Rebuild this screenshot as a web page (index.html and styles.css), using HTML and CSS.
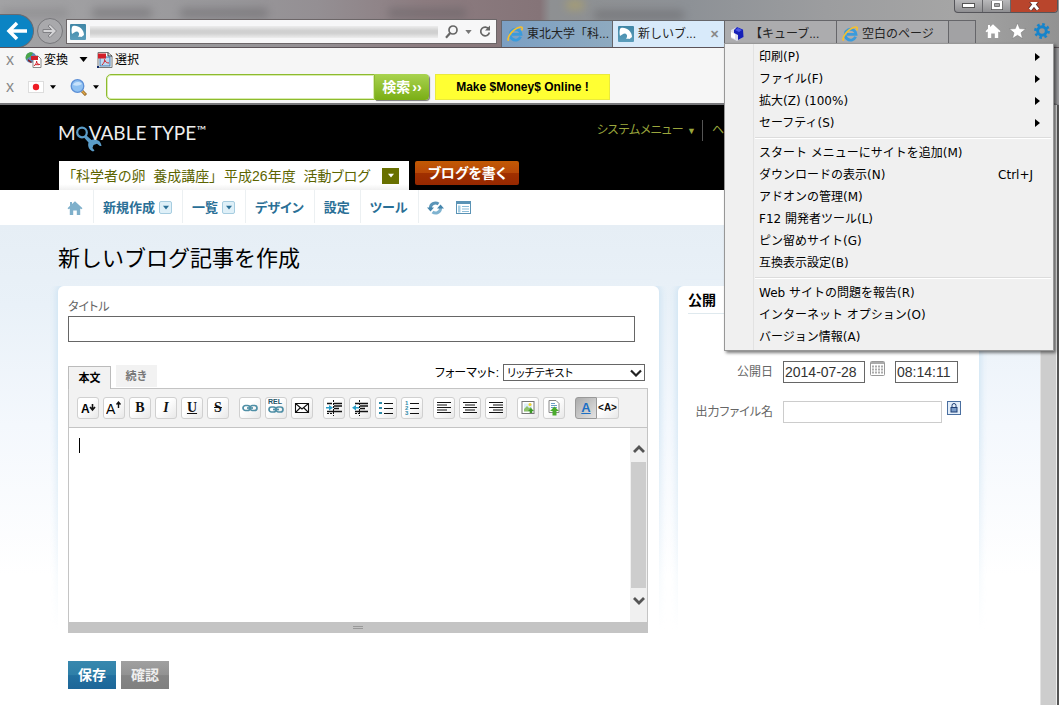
FILE: index.html
```html
<!DOCTYPE html>
<html lang="ja">
<head>
<meta charset="utf-8">
<title>新しいブログ記事を作成</title>
<link rel="stylesheet" href="styles.css">
</head>
<body>
<svg class="defs" width="0" height="0" aria-hidden="true">
  <defs>
    <linearGradient id="gMt" x1="0" y1="0" x2="0" y2="1"><stop offset="0" stop-color="#3f86a6"/><stop offset="1" stop-color="#5b9dbb"/></linearGradient>
    <symbol id="mt" viewBox="0 0 16 16"><rect width="16" height="16" rx="1" fill="url(#gMt)"/><path d="M2 10C1 5 2 2 3 2C8 1 14 5 14 11L11.500 13C10.500 12.500 9 12.500 8 13C10 10 9 8 7 7.500C5 7.500 3.500 9 2 10Z" fill="#fff"/></symbol>
    <symbol id="ie" viewBox="0 0 16 16"><path d="M13.600 10.800A5.400 5.400 0 1 1 14 8.300H5" fill="none" stroke="#3a9bdc" stroke-width="2.800"/><path d="M1.600 14.800C-.5 12 5 3.500 12.500 1.200C15.500 .4 15.800 2 14.600 4.300" fill="none" stroke="#f5c02e" stroke-width="1.700"/></symbol>
    <symbol id="home" viewBox="0 0 16 16"><path d="M8 1.200L15.500 8.200L14.300 9.300L13.200 8.400V15H9.800V10.500H6.200V15H2.800V8.400L1.700 9.300L.5 8.200L3 5.800V2H5V4Z" fill="currentColor"/></symbol>
    <symbol id="tri" viewBox="0 0 8 5"><path d="M0 0H8L4 5Z" fill="currentColor"/></symbol>
  </defs>
</svg>

<header class="chrome">
  <div class="ghosts" aria-hidden="true"><i class="g1"></i><i class="g2"></i><i class="g3"></i><i class="g4"></i><i class="g5"></i><i class="g6"></i></div>
  <button class="back" aria-label="戻る"><svg width="22" height="20" viewBox="0 0 22 20"><path d="M21 10H3M11 2L3 10L11 18" fill="none" stroke="#fff" stroke-width="3.500"/></svg></button>
  <button class="forward" aria-label="進む"><svg width="16" height="14" viewBox="0 0 16 14"><path d="M1 5.500H9.500L6 2L8 .5L14.500 7L8 13.500L6 12L9.500 8.500H1Z" fill="#d4d4d6" stroke="#808084"/></svg></button>
  <div class="address">
    <svg width="16" height="16"><use href="#mt"/></svg>
    <div class="urlwrap"><input class="url" type="text" aria-label="アドレス"></div>
    <button aria-label="検索"><svg width="13" height="14" viewBox="0 0 13 14"><circle cx="8" cy="5" r="4" fill="none" stroke="#666" stroke-width="1.700"/><path d="M5.200 8L1 12.800" stroke="#666" stroke-width="2.200"/></svg></button>
    <button aria-label="履歴" class="soft"><svg width="7" height="4"><use href="#tri"/></svg></button>
    <button aria-label="更新"><svg width="12" height="13" viewBox="0 0 12 13"><path d="M9.800 4A4.400 4.400 0 1 0 10.400 7.500" fill="none" stroke="#666" stroke-width="1.700"/><path d="M11 .5V5.500H6Z" fill="#666"/></svg></button>
  </div>
  <nav class="tabs" aria-label="タブ">
    <button class="tab blue"><svg width="16" height="16"><use href="#ie"/></svg><span>東北大学「科...</span></button>
    <button class="tab active"><svg width="16" height="16"><use href="#mt"/></svg><span>新しいブ...</span><b class="x">✕</b></button>
    <button class="tab"><svg width="16" height="16" viewBox="0 0 16 16"><path d="M7 1L13 3.500V11L7 15L1 12V4Z" fill="#dedee8"/><path d="M7 1L13 3.500L13.500 11L8 14V9L4 7V4Z" fill="#1620b8"/><path d="M8 2L12 4L9 6L5 4Z" fill="#4a55e6"/><path d="M1 6L5 8V13L1 11Z" fill="#fff"/></svg><span>【キューブ...</span></button>
    <button class="tab"><svg width="16" height="16"><use href="#ie"/></svg><span>空白のページ</span></button>
    <button class="newtab" aria-label="新しいタブ"></button>
  </nav>
  <div class="tools">
    <button aria-label="ホーム"><svg width="16" height="16"><use href="#home"/></svg></button>
    <button aria-label="お気に入り"><svg width="17" height="16" viewBox="0 0 17 16"><path d="M8.500 0L10.700 5.600L16.600 6L12 9.800L13.600 15.600L8.500 12.300L3.400 15.600L5 9.800L.4 6L6.300 5.600Z" fill="#fff" stroke="#777" stroke-width=".5"/></svg></button>
    <button aria-label="ツール"><svg width="16" height="16" viewBox="0 0 16 16"><circle cx="8" cy="8" r="4.300" fill="none" stroke="#1584cc" stroke-width="3"/><circle cx="8" cy="8" r="6.600" fill="none" stroke="#1584cc" stroke-width="2.600" stroke-dasharray="2.600 2.584"/></svg></button>
  </div>
  <div class="winctl">
    <button aria-label="最小化"><svg width="13" height="6" viewBox="0 0 13 6"><rect x=".5" y=".5" width="12" height="4" fill="#fff" stroke="#555"/></svg></button>
    <button aria-label="元に戻す"><svg width="12" height="10" viewBox="0 0 12 10"><rect x="2" y="1" width="8" height="6" fill="none" stroke="#555" stroke-width="4"/><rect x="2" y="1" width="8" height="6" fill="none" stroke="#fff" stroke-width="2.400"/></svg></button>
    <button class="close" aria-label="閉じる"><svg width="14" height="9" viewBox="0 0 14 9"><path d="M2.500 -3L11 7.500M11.500 -3L3 7.500" stroke="#5a3030" stroke-width="4.400"/><path d="M2.500 -3L11 7.500M11.500 -3L3 7.500" stroke="#fff" stroke-width="2.800"/></svg></button>
  </div>
</header>

<section class="bars">
  <div class="bar">
    <button class="bx" aria-label="閉じる">x</button>
    <button class="pdf"><svg width="17" height="16" viewBox="0 0 17 16"><circle cx="6" cy="5.500" r="5.300" fill="#5b87bd"/><path d="M2 2C4 0 7 0 8 1L6 4L3 6L1 8C0 5 1 3 2 2Z" fill="#4aa548"/><path d="M3 7L7 10L6 11L3 9Z" fill="#8b1f1f"/><path d="M8 4H13L16 7V15.500H8Z" fill="#fff" stroke="#888"/><rect x="6" y="4" width="7" height="4" fill="#d2202a"/><path d="M9 14C11 12 12 10 11.500 9M11.500 9C12 12 13.500 12.500 15 12.500M10 12.700H14" fill="none" stroke="#d2202a"/></svg>変換</button>
    <button class="drop" aria-label="変換メニュー"><svg width="9" height="5"><use href="#tri"/></svg></button>
    <button class="pdf"><svg width="16" height="16" viewBox="0 0 16 16"><path d="M1 .5H11L15 4V15.500H1Z" fill="#fff" stroke="#777"/><path d="M11 .5V4H15" fill="none" stroke="#333"/><rect x="3" y="5" width="10" height="9" fill="#bcd8ef" stroke="#3f78ae"/><rect x="1" y="1.500" width="8" height="5" fill="#d2202a"/><path d="M5 13C7 11 8 9 7.500 7.500C8 10 10 11 12 11" fill="none" stroke="#d2202a"/><path d="M0 14H2V16H0Z" fill="#102a6a"/></svg>選択</button>
  </div>
  <div class="bar search">
    <button class="bx" aria-label="閉じる">x</button>
    <button class="flag" aria-label="日本"><svg width="16" height="12" viewBox="0 0 16 12"><rect x=".5" y=".5" width="15" height="11" fill="#fff" stroke="#ddd"/><circle cx="8" cy="6" r="3.200" fill="#ee1c25"/></svg><svg width="6" height="4"><use href="#tri"/></svg></button>
    <button class="lens" aria-label="検索の種類"><svg width="17" height="17" viewBox="0 0 17 17"><path d="M12 12L16 16" stroke="#8a5a18" stroke-width="3"/><path d="M12 12L15.500 15.500" stroke="#e0aa4c" stroke-width="1.500"/><circle cx="7.500" cy="7" r="6.300" fill="#8fc1f2" stroke="#5c8fd6" stroke-width="1.300"/><path d="M3 6C4 2.500 10 2 12 5C9 7 6 7 3 6Z" fill="#c8e2fb"/></svg><svg width="6" height="4"><use href="#tri"/></svg></button>
    <form class="sform" onsubmit="return false"><input type="text" aria-label="検索語"><button>検索<span>››</span></button></form>
    <a class="ad" href="#">Make $Money$ Online !</a>
  </div>
</section>

<div class="window">
<div class="page">
  <header class="mt">
    <div class="top">
      <a class="logo" href="#" aria-label="Movable Type"><span>M</span><svg width="27" height="26" viewBox="0 0 27 26"><circle cx="7" cy="6.500" r="4.800" fill="none" stroke="#5a9cc8" stroke-width="2.200"/><path d="M9 11.500L11.500 9.500L16.500 14C21 12.500 26 14.500 26.500 20L25 20L22 17.800L18.500 19L17.500 22L19.500 24.500L18 25.500C13.500 23.500 12.500 20 13.500 16.500Z" fill="#5a9cc8"/></svg><span>VABLE TYPE</span><small>™</small></a>
      <div class="sys"><a href="#">システムメニュー <small>▼</small></a><a href="#">ヘルプ</a></div>
    </div>
    <div class="blogrow">
      <button class="blog">「科学者の卵&nbsp; 養成講座」&nbsp; 平成26年度&nbsp; 活動ブログ<i><svg width="6" height="5"><use href="#tri"/></svg></i></button>
      <button class="write">ブログを書く</button>
    </div>
  </header>
  <nav class="menu">
    <a href="#" aria-label="ホーム" class="pale"><svg width="16" height="16"><use href="#home"/></svg></a>
    <a href="#">新規作成<i><svg width="6" height="5"><use href="#tri"/></svg></i></a>
    <a href="#">一覧<i><svg width="6" height="5"><use href="#tri"/></svg></i></a>
    <a href="#">デザイン</a>
    <a href="#">設定</a>
    <a href="#">ツール</a>
    <a href="#" aria-label="再構築"><svg width="17" height="14" viewBox="0 0 17 14"><path d="M3.500 7.500A5 5 0 0 1 11.500 3" fill="none" stroke="#5b95b8" stroke-width="3"/><path d="M13.500 6.500A5 5 0 0 1 5.500 11" fill="none" stroke="#7fb3d0" stroke-width="3"/><path d="M0 6.500H7L3.500 10.500ZM10 7.500H17L13.500 3.500Z" fill="#4585ac"/></svg></a>
    <a href="#" aria-label="サイトの表示" class="last"><svg width="15" height="13" viewBox="0 0 15 13"><rect x=".5" y=".5" width="14" height="12" fill="#fff" stroke="#5b93b5"/><path d="M1 2H14" stroke="#5b93b5" stroke-width="2"/><path d="M2 4.500H4.500V11.500H2Z" fill="#a7cfe4"/><path d="M6 5.500H13M6 8H13M6 10.500H13" stroke="#8dbdd8"/></svg></a>
  </nav>
  <main class="body">
    <h1>新しいブログ記事を作成</h1>
    <div class="cols">
      <section class="panel edit">
        <label for="title">タイトル</label>
        <input id="title" type="text">
        <div class="tabrow">
          <button class="et on">本文</button><button class="et">続き</button>
          <label class="fmt" for="fmt">フォーマット:</label>
          <div class="selwrap"><select id="fmt"><option>リッチテキスト</option></select><svg width="12" height="8" viewBox="0 0 12 8"><path d="M1 1.500L6 6.500L11 1.500" fill="none" stroke="#222" stroke-width="2.200"/></svg></div>
        </div>
        <div class="editor">
          <div class="tb">
            <div class="grp">
              <button aria-label="小さく"><svg width="16" height="16" viewBox="0 0 16 16"><text x="1" y="13" class="ga">A</text><path d="M12.500 4V10M10 7L12.500 10L15 7" fill="none" stroke="#111" stroke-width="1.600"/></svg></button>
              <button aria-label="大きく"><svg width="16" height="16" viewBox="0 0 16 16"><text x="0" y="14" class="gb">A</text><path d="M12.500 8V2M10.500 4.500L12.500 2L14.500 4.500" fill="none" stroke="#111" stroke-width="1.400"/></svg></button>
              <button aria-label="太字"><b>B</b></button>
              <button aria-label="斜体"><b><em>I</em></b></button>
              <button aria-label="下線"><b><u>U</u></b></button>
              <button aria-label="取り消し線"><b><s>S</s></b></button>
            </div>
            <div class="grp">
              <button aria-label="リンク"><svg width="16" height="16" viewBox="0 0 16 16"><g fill="none" stroke="#4f8fa6" stroke-width="1.700"><rect x="1" y="5.500" width="7" height="5" rx="2.500"/><rect x="8" y="5.500" width="7" height="5" rx="2.500"/><path d="M5 8H11"/></g></svg></button>
              <button aria-label="RELリンク"><svg width="16" height="20" viewBox="0 0 16 20"><text x="0" y="6" class="rel">REL</text><g fill="none" stroke="#4f8fa6" stroke-width="1.700"><rect x="1" y="9" width="7" height="5" rx="2.500"/><rect x="8" y="9" width="7" height="5" rx="2.500"/><path d="M5 11.500H11"/></g></svg></button>
              <button aria-label="メール"><svg width="16" height="16" viewBox="0 0 16 16"><path d="M1.500 3.500H14.500V12.500H1.500ZM1.500 3.500L8 9L14.500 3.500M1.500 12.500L6 8M14.500 12.500L10 8" fill="#fff" stroke="#111" stroke-width="1.100"/></svg></button>
            </div>
            <div class="grp">
              <button aria-label="インデント"><svg width="18" height="16" viewBox="0 0 18 16"><path d="M2 3.500H7M9 3.500H17M9 6H17M9 8.500H14M2 11.500H17" stroke="#111" stroke-width="1.500"/><path d="M8.500 0V16M2 13.500H9" stroke="#111" stroke-dasharray="2 1"/><path d="M1 7H4V5L8 7.700L4 10.500V8.500H1Z" fill="#2b9dc7"/></svg></button>
              <button aria-label="インデント解除"><svg width="18" height="16" viewBox="0 0 18 16"><path d="M4 3.500H17M9 6H17M9 8.500H14M4 11.500H17" stroke="#111" stroke-width="1.500"/><path d="M8.500 0V16M4 13.500H9" stroke="#111" stroke-dasharray="2 1"/><path d="M8 7H5V5L1 7.700L5 10.500V8.500H8Z" fill="#2b9dc7"/></svg></button>
              <button aria-label="箇条書き"><svg width="16" height="16" viewBox="0 0 16 16"><path d="M6 3.500H15M6 8.500H15M6 13.500H15" stroke="#111"/><path d="M1 2H4V4H1ZM1 7H4V9H1ZM1 12H4V14H1Z" fill="#2f8aa8"/></svg></button>
              <button aria-label="番号付き"><svg width="16" height="16" viewBox="0 0 16 16"><path d="M6 3.500H15M6 8.500H15M6 13.500H15" stroke="#111"/><g class="num"><text x="1" y="5">1</text><text x="1" y="10">2</text><text x="1" y="15">3</text></g></svg></button>
            </div>
            <div class="grp">
              <button aria-label="左揃え"><svg width="16" height="16" viewBox="0 0 16 16"><path d="M1 2.500H15M1 5H11M1 7.500H15M1 10H11M1 12.500H15" stroke="#111" stroke-width="1.200"/></svg></button>
              <button aria-label="中央揃え"><svg width="16" height="16" viewBox="0 0 16 16"><path d="M1 2.500H15M3 5H13M1 7.500H15M3 10H13M1 12.500H15" stroke="#111" stroke-width="1.200"/></svg></button>
              <button aria-label="右揃え"><svg width="16" height="16" viewBox="0 0 16 16"><path d="M1 2.500H15M5 5H15M1 7.500H15M5 10H15M1 12.500H15" stroke="#111" stroke-width="1.200"/></svg></button>
            </div>
            <div class="grp">
              <button aria-label="画像"><svg width="16" height="16" viewBox="0 0 16 16"><rect x="2" y="1.500" width="12" height="12" fill="#fff" stroke="#777"/><rect x="4" y="3.500" width="8" height="8" fill="#dceef8"/><path d="M4 11.500V9L7 6L9 8L11 7L12 11.500Z" fill="#8dc06a"/><circle cx="10" cy="4.500" r="1.500" fill="#f2d22e"/><path d="M11 8L14 11H12.300V13H9.700V11H8Z" fill="#3c9a28"/></svg></button>
              <button aria-label="ファイル"><svg width="16" height="16" viewBox="0 0 16 16"><path d="M3 .5H10L13 3.500V12.500H3Z" fill="#fff" stroke="#888"/><path d="M5 3.500H9M5 5.500H11M5 7.500H11" stroke="#6c9fc4"/><path d="M8.500 6.500L13 11H10.500V15.500H6.500V11H4Z" fill="#4aab2c"/></svg></button>
            </div>
            <div class="pair">
              <button class="on" aria-label="リッチ"><u>A</u></button><button aria-label="HTML">&lt;A&gt;</button>
            </div>
          </div>
          <div class="area">
            <textarea aria-label="本文"></textarea><i class="caret"></i>
            <div class="sb"><svg width="12" height="9" viewBox="0 0 12 9"><path d="M1 7L6 2L11 7" fill="none" stroke="#555" stroke-width="2.800"/></svg><i></i><svg width="12" height="9" viewBox="0 0 12 9"><path d="M1 2L6 7L11 2" fill="none" stroke="#555" stroke-width="2.800"/></svg></div>
          </div>
          <div class="grip"><i></i></div>
        </div>
      </section>
      <aside class="panel pub">
        <h2>公開</h2>
        <div class="fields">
          <label for="d">公開日</label>
          <div class="f"><input id="d" class="date" type="text" value="2014-07-28"><button class="cal" aria-label="カレンダー"><svg width="15" height="15" viewBox="0 0 15 15"><rect x=".5" y=".5" width="14" height="14" rx="1" fill="#fff" stroke="#999"/><path d="M1 2H14" stroke="#aaa" stroke-width="2"/><path d="M2 5.500H13M2 8.500H13M2 11.500H13" stroke="#aaa" stroke-width="2" stroke-dasharray="2 1"/></svg></button><input class="time" type="text" value="08:14:11" aria-label="公開時刻"></div>
          <label for="o">出力ファイル名</label>
          <div class="f"><input id="o" class="out" type="text"><button class="lock" aria-label="ロック"><svg width="14" height="14" viewBox="0 0 14 14"><rect x=".5" y=".5" width="13" height="13" fill="#e3eefa" stroke="#4a6fa0"/><rect x="4" y="6.500" width="6" height="4.500" fill="#7b9cc8" stroke="#1f3f74"/><path d="M5 6V4.500A2 2 0 0 1 9 4.500V6" fill="none" stroke="#1f3f74"/></svg></button></div>
        </div>
      </aside>
    </div>
    <div class="actions"><button class="save">保存</button><button>確認</button></div>
  </main>
</div>
<div class="pagebar"></div>
</div>

<div class="popup" role="menu">
  <button role="menuitem">印刷(P)<svg class="arr" width="5" height="8" viewBox="0 0 5 8"><path d="M0 0L5 4L0 8Z"/></svg></button>
  <button role="menuitem">ファイル(F)<svg class="arr" width="5" height="8" viewBox="0 0 5 8"><path d="M0 0L5 4L0 8Z"/></svg></button>
  <button role="menuitem">拡大(Z) (100%)<svg class="arr" width="5" height="8" viewBox="0 0 5 8"><path d="M0 0L5 4L0 8Z"/></svg></button>
  <button role="menuitem">セーフティ(S)<svg class="arr" width="5" height="8" viewBox="0 0 5 8"><path d="M0 0L5 4L0 8Z"/></svg></button>
  <hr>
  <button role="menuitem">スタート メニューにサイトを追加(M)</button>
  <button role="menuitem">ダウンロードの表示(N)<span>Ctrl+J</span></button>
  <button role="menuitem">アドオンの管理(M)</button>
  <button role="menuitem">F12 開発者ツール(L)</button>
  <button role="menuitem">ピン留めサイト(G)</button>
  <button role="menuitem">互換表示設定(B)</button>
  <hr>
  <button role="menuitem">Web サイトの問題を報告(R)</button>
  <button role="menuitem">インターネット オプション(O)</button>
  <button role="menuitem">バージョン情報(A)</button>
</div>
</body>
</html>
```
FILE: styles.css
```css
* { box-sizing: border-box; }
body {
  margin: 0; min-height: 100vh; display: flex; flex-direction: column; position: relative;
  font: 12px/16px "Liberation Sans", "Noto Sans CJK JP", sans-serif; color: #000; background: #fff;
}
button, input, select, textarea { font: inherit; color: inherit; margin: 0; padding: 0; border: 0; border-radius: 0; background: none; outline: none; }
button { display: inline-flex; align-items: center; justify-content: center; white-space: nowrap; }
a { color: inherit; text-decoration: none; }
svg { display: block; flex: none; }
i { font-style: normal; }
.defs { position: absolute; }

/* browser frame */
.chrome {
  position: relative; display: flex; align-items: flex-end; height: 48px; overflow: hidden;
  border-bottom: 1px solid #5c5358;
  background: linear-gradient(90deg, #a3a3a5 0, #98979a 22%, #948f93 30%, #8c7c80 40%, #857478 51%, #8e9092 52%, #8d9196 65%, #9c9d9f 78%, #a5a5a5 90%, #929292 100%);
}
.ghosts i { position: absolute; top: 8px; height: 10px; background: #5c5a5e; opacity: .4; filter: blur(4px); border-radius: 4px; }
.ghosts .g1 { left: 0; width: 68px; opacity: .2; }
.ghosts .g2 { left: 92px; width: 60px; }
.ghosts .g3 { left: 180px; width: 88px; }
.ghosts .g4 { left: 388px; width: 78px; }
.ghosts .g5 { left: 594px; width: 90px; top: 10px; }
.ghosts .g6 { left: 566px; width: 18px; top: 0; background: #c8b04a; }
.back { position: relative; width: 34px; height: 34px; padding-left: 1px; margin-bottom: -1px; border-radius: 0 17px 17px 0; background: #0b84c4; border: 1px solid #6a6a70; border-left: 0; }
.forward { position: relative; width: 26px; height: 26px; margin: 0 3px; border-radius: 13px; border: 1px solid #77777b; background: #a9a9ac; margin-bottom: 3px; }
.address { position: relative; flex: 1; height: 25px; display: flex; align-items: center; gap: 7px; padding: 0 5px 0 3px; margin-bottom: 3px; border: 1px solid #6c6668; background: #f7f7f8; }
.urlwrap { flex: 1; height: 12px; margin-left: -3px; background: linear-gradient(#ededed, #d0d0d0 40%, #d0d0d0 60%, #ededed); }
.url { width: 100%; height: 12px; display: block; }
.soft { color: #777; }
.tabs { position: relative; display: flex; margin-left: 4px; height: 27px; }
.tab { width: 112px; justify-content: flex-start; gap: 4px; padding: 0 5px; border: 1px solid #66666a; border-width: 1px 1px 0 0; background: #acacae; color: #222; }
.tab.blue { background: linear-gradient(90deg, #7b9fc3, #8eaac0); border-left-width: 1px; }
.tab.active { background: #d8eafa; }
.tab .x { margin-left: auto; font-size: 11px; color: #888; }
.newtab { width: 27px; border: 1px solid #66666a; border-width: 1px 1px 0 0; background: #a2a2a4; }
.tools { position: relative; display: flex; gap: 8px; padding: 0 9px 8px 9px; }
.tools button { color: #fff; }
.winctl { position: absolute; right: 1px; top: 0; height: 13px; display: flex; border: 1px solid #55555a; border-top: 0; border-radius: 0 0 4px 4px; background: linear-gradient(#b9b9bb, #8f8f92); overflow: hidden; }
.winctl button { width: 28px; border-right: 1px solid #66666a; }
.winctl .close { width: 46px; border: 0; background: #b9452c; }

.bars { background: #f6f6f6; border-bottom: 2px solid #77777a; height: 57px; border-right: 5px solid #9a9a9c; }
.bar { display: flex; align-items: center; height: 23px; padding-left: 4px; }
.bar.search { height: 32px; }
.bx { width: 12px; margin-right: 9px; font: 16px/16px "Liberation Sans", sans-serif; color: #888; }
.pdf { gap: 2px; }
.drop { margin: 0 9px 0 11px; }
.flag { gap: 6px; margin-left: 3px; }
.lens { gap: 6px; margin: 0 7px 0 14px; }
.sform { display: flex; margin: 0; width: 323px; height: 26px; }
.sform input { flex: 1; min-width: 0; border: 1px solid #8dbb2e; border-radius: 5px 0 0 5px; background: #fff; box-shadow: inset 0 0 0 1px #d9ecae; }
.sform button { width: 54px; gap: 2px; border-radius: 0 4px 4px 0; color: #fff; font-size: 14px; font-weight: bold; background: linear-gradient(#a9d34f, #7aae15); box-shadow: 1px 1px 1px #777; }
.ad { width: 175px; margin-left: 6px; line-height: 24px; text-align: center; font-weight: bold; background: #ffff33; border: 1px solid #eaea3c; }

/* page */
.window { flex: 1; display: flex; }
.page { flex: 1; min-width: 0; display: flex; flex-direction: column; }
.pagebar { width: 19px; background: #cdcdcd; border-left: 1px solid #e2e2e2; border-right: 2px solid #555; box-shadow: inset -1px 0 #eee; }
.mt { background: #000; height: 85px; padding-left: 58px; display: flex; flex-direction: column; justify-content: space-between; }
.top { display: flex; justify-content: space-between; height: 50px; padding-right: 296px; }
.logo { display: flex; padding-top: 18px; color: #eee; font: 19px/20px Lato, sans-serif; }
.logo svg { margin: 3px -13px 0 -1px; }
.logo small { font-size: 13px; line-height: 14px; }
.sys { display: flex; gap: 9px; padding-top: 15px; color: #9aa63c; font-feature-settings: "palt"; line-height: 20px; height: 36px; }
.sys a:first-child { padding-right: 6px; border-right: 1px solid #555; white-space: nowrap; }
.sys a:last-child { width: 32px; white-space: nowrap; }
.sys small { font-size: 9px; }
.blogrow { display: flex; gap: 6px; align-items: flex-start; padding-left: 1px; }
.blog { height: 29px; gap: 12px; padding: 0 10px; background: linear-gradient(#fff 80%, #f0f0f0); color: #5c6400; font-size: 14px; font-feature-settings: "palt"; }
.blog i { width: 17px; height: 16px; display: grid; place-items: center; color: #fff; background: #687000; }
.write { width: 104px; height: 24px; border-radius: 2px; color: #fff; font-size: 14px; font-weight: bold; font-feature-settings: "palt"; background: linear-gradient(#c25a04, #b84808 50%, #a03000 52%, #962800); }
.menu { display: flex; height: 35px; padding-left: 58px; background: #fff; }
.menu a { display: flex; align-items: center; gap: 4px; padding: 2px 10px 0 9px; margin-bottom: 2px; border-right: 1px solid #ecf0f2; color: #2a6f96; font-size: 13px; font-weight: bold; font-feature-settings: "palt"; }
.menu .pale { color: #7fb0cb; }
.menu a:nth-last-child(2) { padding-left: 8px; }
.menu a:nth-last-child(2), .menu .last { border: 0; }
.menu .last { padding-left: 2px; }
.menu i { width: 13px; height: 13px; display: grid; place-items: center; border: 1px solid #a7cde0; border-radius: 2px; background: #dff0f8; }
.body { flex: 1; padding: 0 61px 16px 58px; background: linear-gradient(#e6eef5 0, #e9f1f8 80px, #f4f8fd 200px, #fff 350px); }
h1 { margin: 0; padding: 18px 0 11px; font-size: 22px; line-height: 32px; font-weight: normal; }
.cols { display: grid; grid-template-columns: 601fr 301fr; gap: 19px; isolation: isolate; }
.panel { position: relative; padding: 0 10px; background: #fff; border-radius: 6px 6px 0 0; }
.panel::before { content: ""; position: absolute; inset: 0; z-index: -1; border-radius: 6px; box-shadow: 0 0 6px 2px #cfe4f3; clip-path: inset(-8px -8px 0 -8px); mask-image: linear-gradient(#000 30%, transparent); mask-clip: no-clip; }
.panel label { color: #666; font-feature-settings: "palt"; }
.edit { padding-top: 12px; }
.edit > label { display: block; line-height: 18px; }
#title { display: block; width: calc(100% - 14px); height: 26px; border: 1px solid #666; background: #fff; }
.tabrow { display: flex; align-items: flex-end; height: 46px; }
.et { height: 22px; width: 41px; margin-bottom: 1px; margin-left: 5px; font-size: 11px; font-weight: bold; color: #777; background: #f2f2f2; }
.et.on { position: relative; height: 23px; width: 43px; margin: 0 0 -1px; color: #000; border: 1px solid #bbb; border-bottom: 0; }
.panel .fmt { margin: 0 4px 7px auto; color: #000; }
.selwrap { position: relative; width: 142px; height: 17px; margin: 0 4px 7px 0; }
.selwrap select { appearance: none; display: block; width: 100%; height: 17px; padding: 0 3px; border: 1px solid #666; background: #fff; font-size: 11px; line-height: 14px; font-feature-settings: "palt"; }
.selwrap svg { position: absolute; right: 3px; top: 5px; pointer-events: none; }
.editor { border: 1px solid #c4c4c4; margin-right: 1px; }
.tb { display: flex; flex-wrap: wrap; gap: 10px; padding: 8px; background: #f2f2f2; border-bottom: 1px solid #c4c4c4; }
.grp { display: flex; gap: 4px; }
.tb button { width: 22px; height: 22px; border: 1px solid #d0d0d0; border-radius: 3px; background: linear-gradient(135deg, #fff 40%, #e8e8e8); color: #111; font: 14px/16px "Liberation Serif", serif; }
.tb .pair { display: flex; }
.tb .pair button { font: bold 10px/14px "Liberation Sans", sans-serif; border-radius: 0 3px 3px 0; border-left: 0; }
.tb .pair .on { border: 1px solid #999; border-radius: 3px 0 0 3px; color: #1c6fc4; background: linear-gradient(135deg, #aaa, #e4e4e4); font-size: 13px; }
.ga { font: bold 12px "Liberation Sans", sans-serif; }
.gb { font: 14px "Liberation Sans", sans-serif; }
.rel { font: bold 7px "Liberation Sans", sans-serif; fill: #1d5366; }
.num text { font: bold 6px "Liberation Sans", sans-serif; fill: #2f8aa8; }
.area { position: relative; display: flex; height: 194px; background: #fff; }
.area textarea { flex: 1; resize: none; padding: 8px 10px; }
.caret { position: absolute; left: 10px; top: 10px; width: 1px; height: 15px; background: #000; }
.sb { width: 17px; background: #f0f0f0; display: flex; flex-direction: column; align-items: center; padding: 17px 0; gap: 8px; }
.sb i { flex: 1; width: 15px; background: #cdcdcd; }
.grip { height: 10px; background: #c4c4c4; display: grid; place-items: center; }
.grip i { width: 10px; height: 3px; border: 1px solid #999; border-width: 1px 0; }
.pub h2 { margin: 0 0 47px; padding: 5px 0 4px; font-size: 14px; line-height: 18px; border-bottom: 1px solid #dfe9ee; }
.fields { display: grid; grid-template-columns: 85px 1fr; gap: 18px 10px; align-items: center; text-align: right; }
.f { display: flex; align-items: flex-start; }
.f input { height: 22px; padding: 0 1px; border: 1px solid #666; font-size: 14px; background: #fff; color: #333; min-width: 0; }
.date { width: 82px; } .time { width: 63px; }
.cal { margin: 0 10px 0 5px; }
.f .out { width: 159px; border-color: #ccc; }
.lock { margin-left: 5px; }
.actions { display: flex; gap: 5px; padding: 28px 10px 0; }
.actions button { width: 48px; height: 28px; color: #eee; font-size: 14px; font-weight: bold; background: linear-gradient(#a0a0a0, #929292 50%, #858585 52%, #808080); }
.actions .save { background: linear-gradient(#3888ae, #2e7fa8 50%, #2270a0 52%, #1d6698); color: #fff; }

/* tools menu */
.popup { position: absolute; top: 43px; right: 5px; width: 330px; padding: 2px; border: 1px solid #979797; background: linear-gradient(90deg, #f0f0f0 28px, #e2e2e2 28px, #e2e2e2 29px, #f0f0f0 29px); box-shadow: 2px 2px 3px rgba(0,0,0,.5); font-family: "DejaVu Sans", "Noto Sans CJK JP", sans-serif; }
.popup button { display: flex; width: 100%; height: 22px; justify-content: space-between; padding: 0 18px 0 32px; }
.popup .arr { margin-right: -7px; }
.popup hr { margin: 3px 0 3px 28px; height: 2px; border: 0; border-top: 1px solid #dcdcdc; background: #fff; }
```
